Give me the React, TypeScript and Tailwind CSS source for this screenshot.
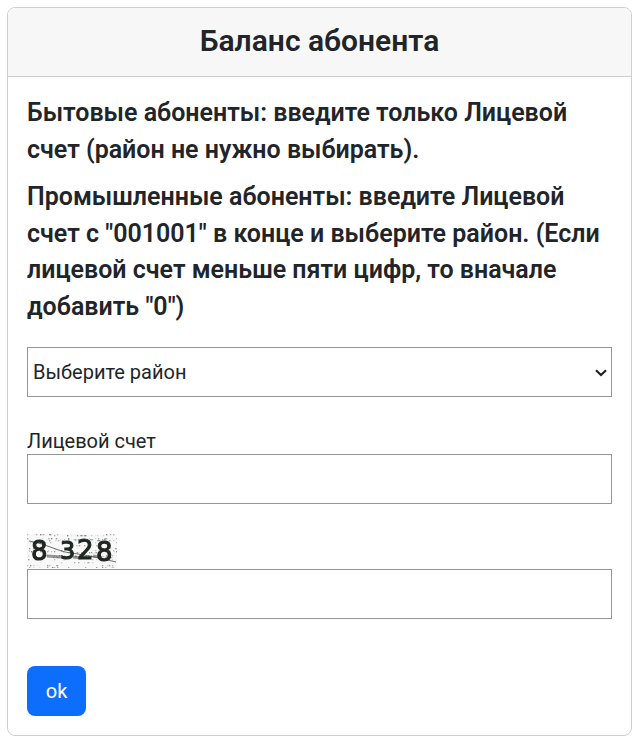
const noise = Array.from({ length: 300 }, (_, i) => {
    const x = (i * 37 + (i * i) % 29) % 90;
    const y = (i * 53 + (i * i * 3) % 17) % 34;
    const o = 0.1 + ((i * 7) % 10) / 14;
    return { x, y, o };
});

function Captcha() {
    return (
        <svg className="block w-[90px] h-[34px] blur-[0.45px]" viewBox="0 0 90 34">
            <rect width="90" height="34" fill="#f8f8f8" />
            {noise.map((n, i) => (
                <rect key={i} x={n.x} y={n.y} width="1.3" height="1.3" fill="#777" opacity={n.o} />
            ))}
            <path d="M2 7 C20 10 32 18 44 19 C60 21 72 24 89 28" stroke="#333" strokeWidth="1" fill="none" opacity="0.7" />
            <path d="M20 22 L34 23 M46 23 L54 24 M66 22 L72 23" stroke="#555" strokeWidth="3" opacity="0.6" />
            <g fontFamily="'DejaVu Sans', sans-serif" fill="#1f2622" stroke="#1f2622" strokeWidth="1.1">
                <text x="4" y="26" fontSize="26">8</text>
                <text x="33" y="25" fontSize="24">3</text>
                <text x="50" y="25" fontSize="26">2</text>
                <text x="69" y="27" fontSize="26">8</text>
            </g>
        </svg>
    );
}

export default function App() {
    return (
        <div className="p-[7px] bg-white font-['Roboto',sans-serif] text-[#212529]">
            <div className="w-[625px] h-[729px] border border-[#cfcfcf] rounded-[8px] overflow-hidden">
                {/* Header */}
                <div className="h-[69px] bg-[#f7f7f7] border-b border-[#cfcfcf] flex items-center justify-center">
                    <h1 className="text-[30px] leading-[36px] font-semibold -mt-[2px]">Баланс абонента</h1>
                </div>

                {/* Body */}
                <div className="px-[19px] pt-[18px]">
                    <p className="text-[25px] leading-[36.5px] font-semibold mb-[11px]">
                        Бытовые абоненты: введите только Лицевой счет (район не нужно выбирать).
                    </p>
                    <p className="text-[25px] leading-[36.5px] font-semibold mb-[22px]">
                        Промышленные абоненты: введите Лицевой счет с "001001" в конце и выберите район. (Если лицевой счет меньше пяти цифр, то вначале добавить "0")
                    </p>

                    <div className="relative w-[585px]">
                        <select className="block w-full h-[50px] border border-[#969696] bg-white text-[20px] pl-[5px] outline-none appearance-none">
                            <option>Выберите район</option>
                        </select>
                        <svg className="absolute left-[568px] top-[22px] w-[12px] h-[8px]" viewBox="0 0 12 8" fill="none" stroke="#222" strokeWidth="2.2">
                            <path d="M1 1.2 L6 6 L11 1.2" />
                        </svg>
                    </div>

                    <label className="block mt-[32px] text-[20px] leading-[25px]">Лицевой счет</label>
                    <input className="block w-[585px] h-[50px] border border-[#969696] bg-white" />

                    <div className="mt-[30px]">
                        <Captcha />
                    </div>
                    <input className="block w-[585px] h-[50px] border border-[#969696] bg-white mt-px" />

                    <button className="block mt-[47px] w-[59px] h-[50px] bg-[#0d6efd] text-white text-[20px] rounded-[8px]">ok</button>
                </div>
            </div>
        </div>
    );
}
